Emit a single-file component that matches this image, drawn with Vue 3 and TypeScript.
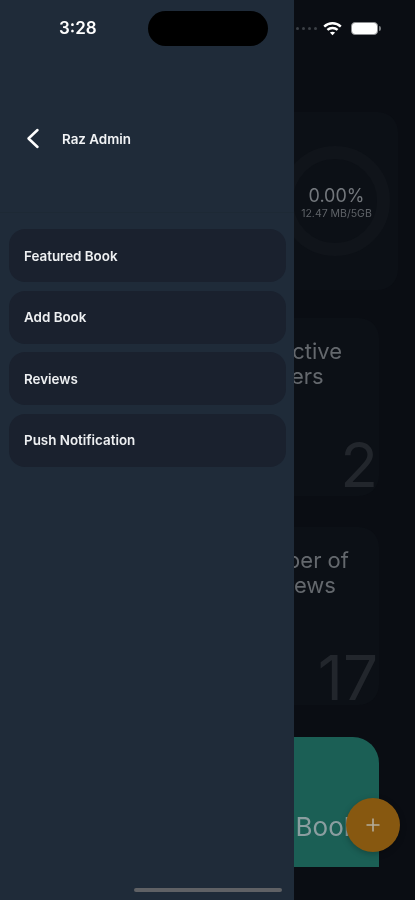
<script setup lang="ts">
const menu: string[] = ['Featured Book', 'Add Book', 'Reviews', 'Push Notification']
</script>

<template>
  <div class="screen">
    <main class="page">
      <div class="status">
        <div class="dots"><i></i><i></i><i></i><i></i></div>
        <svg class="wifi" width="19" height="15" viewBox="0 0 19 15" fill="none" stroke="#fff" stroke-linecap="butt">
          <path d="M1.2 5.6C5.8 1.2 13.2 1.2 17.8 5.6" stroke-width="2.4" />
          <path d="M4.4 8.9C7.2 6.3 11.8 6.3 14.6 8.9" stroke-width="2.4" />
          <path d="M9.5 14.2L6.9 11.6C8.3 10.4 10.7 10.4 12.1 11.6Z" fill="#fff" stroke="none" />
        </svg>
        <div class="battery"><span></span></div>
      </div>

      <section class="storage">
        <div class="ring">
          <div class="percent">0.00%</div>
          <div class="usage">12.47 MB/5GB</div>
        </div>
      </section>

      <section class="stat stat-users">
        <h2><span class="l1">Active</span><span class="l2">Users</span></h2>
        <div class="count">2</div>
      </section>

      <section class="stat stat-reviews">
        <h2><span class="l1">Number of</span><span class="l2">Reviews</span></h2>
        <div class="count">17</div>
      </section>

      <section class="promo"><span>Add Book</span></section>
    </main>

    <aside class="drawer">
      <div class="time">3:28</div>
      <header class="head">
        <svg class="back" width="14" height="21" viewBox="0 0 14 21" fill="none" stroke="#fff" stroke-width="2.5" stroke-linecap="round" stroke-linejoin="round">
          <path d="M11.5 2L2.5 10.5L11.5 19" />
        </svg>
        <span class="name">Raz Admin</span>
      </header>
      <nav class="menu">
        <a v-for="item in menu" :key="item" class="item">{{ item }}</a>
      </nav>
    </aside>

    <div class="island"></div>
    <button class="fab" aria-label="Add">
      <svg width="16" height="16" viewBox="0 0 16 16" stroke="#b4ad9c" stroke-width="1.6"><path d="M8 1.5V14.5M1.5 8H14.5" /></svg>
    </button>
    <div class="home"></div>
  </div>
</template>

<style>
html, body { margin: 0; background: #0a0d13; }
</style>

<style scoped>
.screen {
  position: relative;
  width: 415px;
  height: 900px;
  overflow: hidden;
  background: #0a0d13;
  font-family: Inter, "Liberation Sans", sans-serif;
  filter: blur(0.4px);
}
.page {
  display: flex;
  flex-direction: column;
  align-items: flex-end;
  height: 100%;
}
.status {
  display: flex;
  align-items: center;
  align-self: stretch;
  justify-content: flex-end;
  height: 15px;
  margin-top: 21px;
  padding-right: 37px;
}
.dots { display: flex; gap: 3px; margin-right: 6px; }
.dots i { width: 3px; height: 3px; border-radius: 50%; background: #3c4046; }
.wifi { margin-right: 9px; }
.battery {
  position: relative;
  width: 27px;
  height: 13px;
  box-sizing: border-box;
  border-radius: 4px;
  background: #fff;
  border: 1px solid #8b8d90;
}
.battery span {
  position: absolute;
  right: -4px;
  top: 3px;
  width: 2px;
  height: 5px;
  border-radius: 0 2px 2px 0;
  background: #777a7e;
}
.storage {
  display: flex;
  justify-content: flex-end;
  align-items: center;
  box-sizing: border-box;
  width: 280px;
  height: 178px;
  margin-top: 76px;
  margin-right: 17px;
  padding-right: 8px;
  border-radius: 20px;
  background: #0c1016;
}
.ring {
  display: flex;
  flex-direction: column;
  align-items: center;
  justify-content: center;
  box-sizing: border-box;
  width: 110px;
  height: 110px;
  padding: 2px 0 0 3px;
  border: 13px solid #10141a;
  border-radius: 50%;
}
.percent { font-size: 18px; line-height: 22px; color: #73777c; white-space: nowrap; }
.usage { font-size: 10.5px; line-height: 13px; color: #5f6368; white-space: nowrap; }
.stat {
  position: relative;
  box-sizing: border-box;
  width: 220px;
  height: 178px;
  margin-right: 36px;
  border-radius: 20px;
  background: #0c1016;
}
.stat-users { margin-top: 28px; }
.stat-reviews { margin-top: 31px; }
.stat h2 {
  margin: 21px 0 0;
  font-size: 22px;
  line-height: 25px;
  font-weight: 400;
  color: #64686d;
  white-space: nowrap;
}
.stat h2 span { display: block; }
.stat-users .l1 { padding-left: 118px; }
.stat-users .l2 { padding-left: 104px; }
.stat-reviews .l1 { padding-left: 79px; }
.stat-reviews .l2 { padding-left: 91px; }
.count {
  position: absolute;
  right: 1px;
  bottom: -3px;
  font-size: 62px;
  line-height: 68px;
  color: #22262c;
}
.stat-reviews .count { bottom: -7px; }
.promo {
  display: flex;
  align-items: center;
  justify-content: flex-end;
  box-sizing: border-box;
  width: 220px;
  height: 130px;
  margin-top: 32px;
  margin-right: 36px;
  padding: 48px 0 0;
  border-radius: 0 26px 0 0;
  background: #1b5f55;
}
.promo span {
  font-size: 26px;
  color: #8b9ea0;
  white-space: nowrap;
  margin-right: 21px;
}
.drawer {
  position: absolute;
  left: 0;
  top: 0;
  bottom: 0;
  width: 294px;
  display: flex;
  flex-direction: column;
  background: #1f2b39;
}
.time {
  height: 21px;
  margin-top: 18px;
  padding-left: 59px;
  font-size: 17px;
  line-height: 21px;
  font-weight: 600;
  color: #fff;
}
.head {
  display: flex;
  align-items: center;
  box-sizing: border-box;
  height: 174px;
  padding: 26px 0 0 26px;
  border-bottom: 1px solid #1d2935;
}
.back { margin-right: 22px; }
.name { font-size: 13.4px; font-weight: 600; color: #f1f3f5; }
.menu {
  display: flex;
  flex-direction: column;
  gap: 8.6px;
  padding: 16px 8px 0 9px;
}
.item {
  display: flex;
  align-items: center;
  height: 53px;
  padding-left: 15px;
  border-radius: 16px;
  background: #1a212e;
  font-size: 13.4px;
  font-weight: 600;
  color: #eef0f2;
}
.island {
  position: absolute;
  left: 148px;
  top: 11px;
  width: 120px;
  height: 35px;
  border-radius: 18px;
  background: #000;
}
.fab {
  position: absolute;
  left: 346px;
  top: 798px;
  display: flex;
  align-items: center;
  justify-content: center;
  width: 54px;
  height: 54px;
  padding: 0;
  border: 0;
  border-radius: 50%;
  background: #875810;
  box-shadow: 0 2px 6px rgba(0, 0, 0, 0.25);
}
.home {
  position: absolute;
  left: 134px;
  top: 888px;
  width: 148px;
  height: 4px;
  border-radius: 2px;
  background: #5f6165;
}
</style>
